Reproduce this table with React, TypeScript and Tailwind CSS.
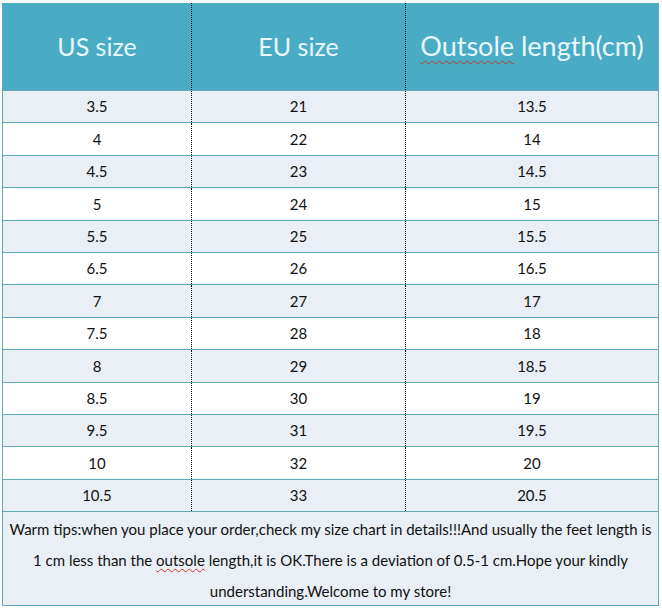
import React from 'react'

const rows: [string, string, string][] = [
  ['3.5', '21', '13.5'],
  ['4', '22', '14'],
  ['4.5', '23', '14.5'],
  ['5', '24', '15'],
  ['5.5', '25', '15.5'],
  ['6.5', '26', '16.5'],
  ['7', '27', '17'],
  ['7.5', '28', '18'],
  ['8', '29', '18.5'],
  ['8.5', '30', '19'],
  ['9.5', '31', '19.5'],
  ['10', '32', '20'],
  ['10.5', '33', '20.5'],
]

export default function App() {
  return (
    <div className="w-[662px] h-[610px] bg-white pt-[3px] pl-[2px] font-['Lato','Open_Sans',sans-serif] text-[#111]">
      <div className="w-[657px] border-l border-r border-b border-[#5fa9b9]">
        <div className="grid grid-cols-[189px_214px_1fr] h-[87px] bg-[#4aabc5] text-[#e9f8fb] text-[25px]">
          <div className="flex items-center justify-center border-r border-dotted border-black">US size</div>
          <div className="flex items-center justify-center border-r border-dotted border-black">EU size</div>
          <div className="flex items-center justify-center text-[27px]">
            <span className="underline decoration-wavy decoration-[#c0392b] decoration-1 underline-offset-4 [text-decoration-skip-ink:none]">Outsole</span>
            <span>&nbsp;length(cm)</span>
          </div>
        </div>
        {rows.map(([us, eu, cm], i) => (
          <div
            key={us}
            className={`grid grid-cols-[189px_214px_1fr] h-[32.4px] border-t border-[#5fa9b9] text-[15px] ${
              i % 2 === 0 ? 'bg-[#e9eff5]' : 'bg-white'
            }`}
          >
            <div className="flex items-center justify-center border-r border-dotted border-black">{us}</div>
            <div className="flex items-center justify-center border-r border-dotted border-black">{eu}</div>
            <div className="flex items-center justify-center">{cm}</div>
          </div>
        ))}
        <div className="border-t border-[#5fa9b9] bg-[#e9eff5] h-[94px] pt-[2px] text-center text-[15px] leading-[31px] text-[#111]">
          <p className="whitespace-nowrap">Warm tips:when you place your order,check my size chart in details!!!And usually the feet length is</p>
          <p>
            1 cm less than the{' '}
            <span className="underline decoration-wavy decoration-[#c0392b] decoration-1 underline-offset-2 [text-decoration-skip-ink:none]">outsole</span>{' '}
            length,it is OK.There is a deviation of 0.5-1 cm.Hope your kindly
          </p>
          <p>understanding.Welcome to my store!</p>
        </div>
      </div>
    </div>
  )
}
